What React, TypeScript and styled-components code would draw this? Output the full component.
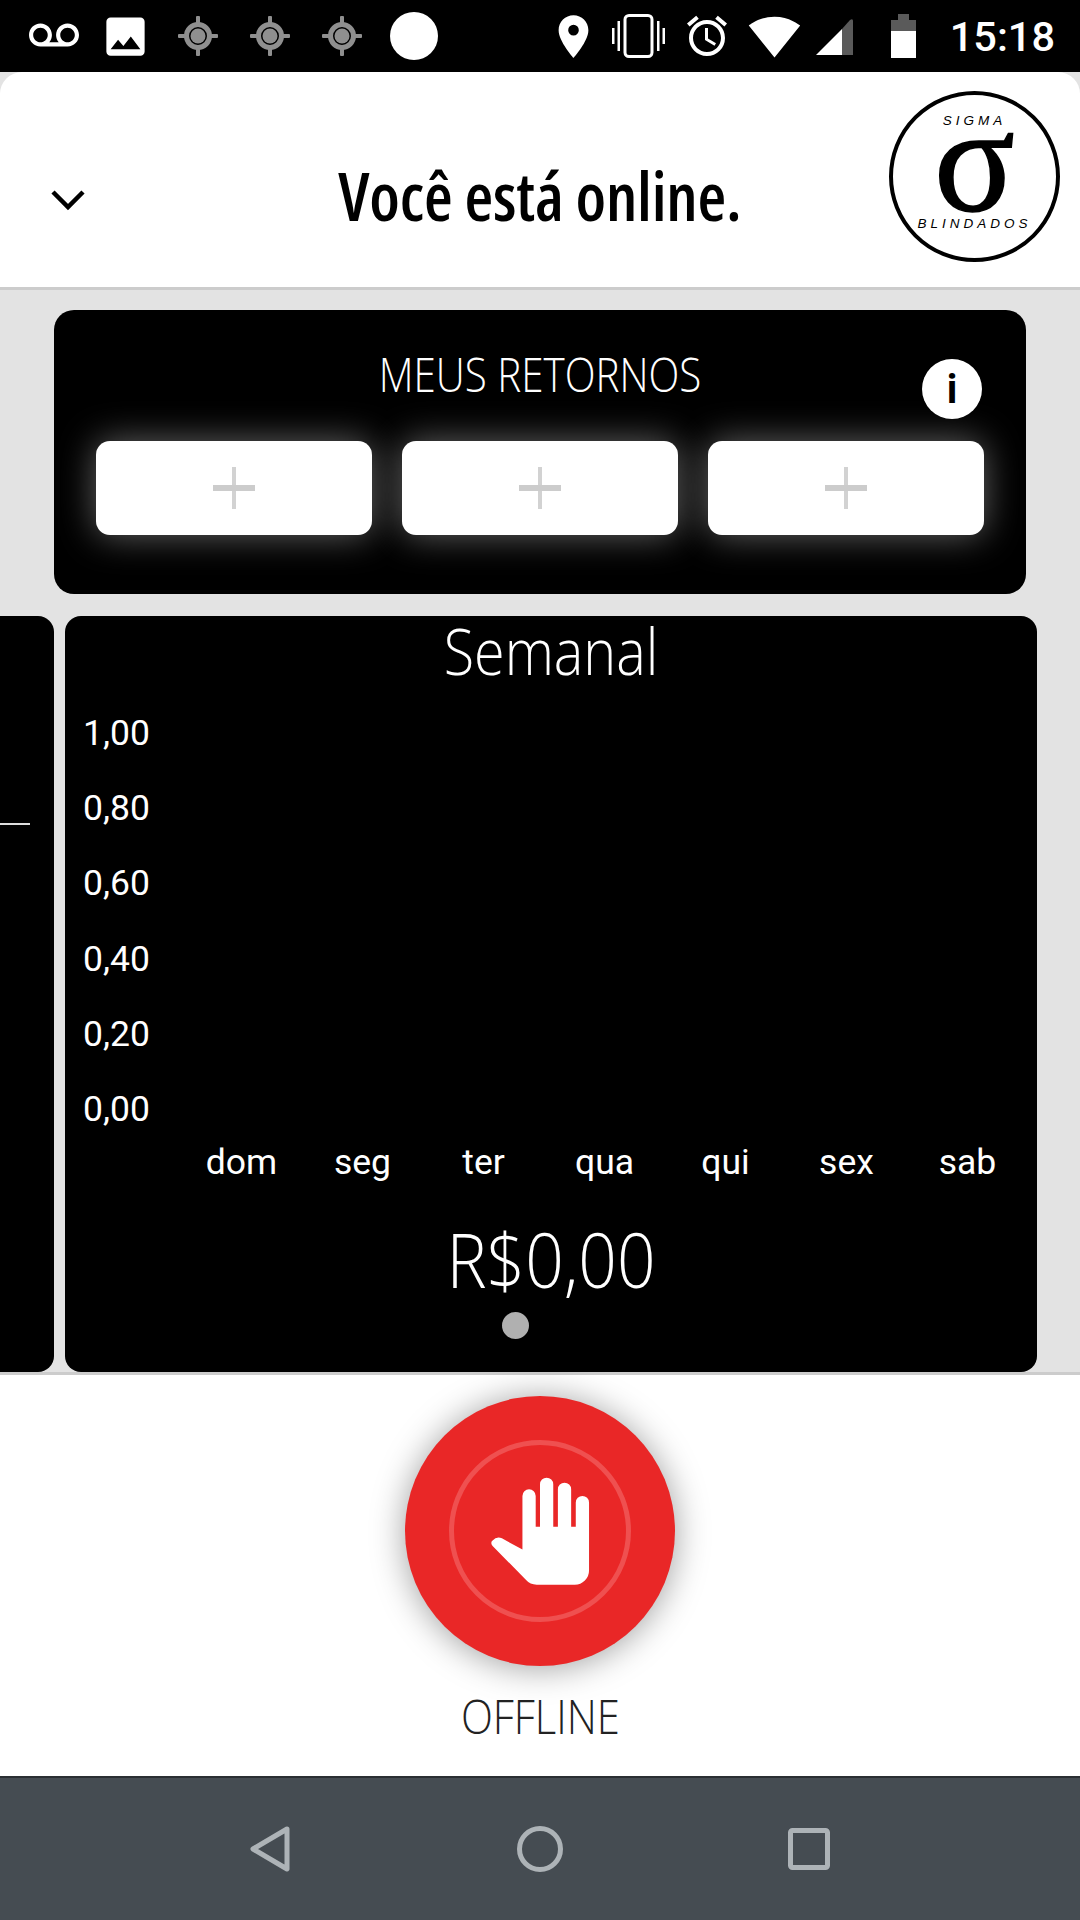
import styled, { createGlobalStyle } from 'styled-components';
import { MdVoicemail, MdPhoto, MdLocationOn, MdAccessAlarm, MdSignalWifi4Bar } from 'react-icons/md';

const GlobalStyle = createGlobalStyle`
  html, body {
    margin: 0;
    padding: 0;
    background: #e3e3e3;
  }
  #root {
    width: 1080px;
    height: 1920px;
    overflow: hidden;
  }
  * { box-sizing: border-box; }
`;

const yLabels = ['1,00', '0,80', '0,60', '0,40', '0,20', '0,00'];
const days = ['dom', 'seg', 'ter', 'qua', 'qui', 'sex', 'sab'];

function PlusIcon() {
  return (
    <svg width="42" height="42" viewBox="0 0 42 42">
      <rect x="19" y="0" width="4" height="42" fill="#d2d2d2" />
      <rect x="0" y="18" width="42" height="6" fill="#cccccc" />
    </svg>
  );
}

function HandIcon() {
  return (
    <svg width="100" height="110" viewBox="450 345 300 332">
      <path
        fill="#fff"
        d="M547 405a20 20 0 0 1 40 0V498H600V370a20 20 0 0 1 40 0V498H654V385a20 20 0 0 1 40 0V498H708V425a20 20 0 0 1 40 0V630a43 43 0 0 1-43 43H590q-20 0-32-14L457 556q-8-10 0-16q12-14 28-7L547 567Z"
      />
    </svg>
  );
}

function GpsIcon() {
  return (
    <svg width="40" height="40" viewBox="0 0 40 40">
      <g fill="#8f8f8f">
        <rect x="18" y="0" width="4" height="8" rx="1" />
        <rect x="18" y="32" width="4" height="8" rx="1" />
        <rect x="0" y="18" width="8" height="4" rx="1" />
        <rect x="32" y="18" width="8" height="4" rx="1" />
        <circle cx="20" cy="20" r="7.5" />
      </g>
      <circle cx="20" cy="20" r="11.5" fill="none" stroke="#8f8f8f" strokeWidth="5" />
    </svg>
  );
}

function VibrateIcon() {
  return (
    <svg width="53" height="44" viewBox="0 0 53 44">
      <rect x="13" y="1.5" width="27" height="41" rx="4" fill="none" stroke="#fff" strokeWidth="3" />
      <g fill="#fff">
        <rect x="0" y="14" width="2.5" height="16" />
        <rect x="5.5" y="7" width="2.5" height="30" />
        <rect x="45" y="7" width="2.5" height="30" />
        <rect x="50.5" y="14" width="2.5" height="16" />
      </g>
    </svg>
  );
}

export default function App() {
  return (
    <Screen>
      <GlobalStyle />
      <StatusBar>
        <Slot $ml={0}><MdVoicemail size={50} /></Slot>
        <Slot $ml={21}><MdPhoto size={51} /></Slot>
        <Slot $ml={27}><GpsIcon /></Slot>
        <Slot $ml={32}><GpsIcon /></Slot>
        <Slot $ml={32}><GpsIcon /></Slot>
        <WhiteDot />
        <StatusRight>
          <Slot $ml={0}><MdLocationOn size={51} /></Slot>
          <Slot $ml={13}><VibrateIcon /></Slot>
          <Slot $ml={18}><MdAccessAlarm size={48} /></Slot>
          <Slot $ml={17}><MdSignalWifi4Bar size={53} /></Slot>
          <Slot $ml={15}>
            <svg width="37" height="37" viewBox="0 0 37 37">
              <path d="M0 37 L26 11 L26 37 Z" fill="#fff" />
              <path d="M26 11 L34 2 Q37 0 37 3 L37 37 L26 37 Z" fill="#5a5a5a" />
            </svg>
          </Slot>
          <Slot $ml={38}>
            <svg width="25" height="44" viewBox="0 0 25 44">
              <path d="M7 0H18V6H25V17H0V6H7Z" fill="#5a5a5a" />
              <rect x="0" y="17" width="25" height="27" fill="#fff" />
            </svg>
          </Slot>
          <Clock>15:18</Clock>
        </StatusRight>
      </StatusBar>

      <Header>
        <Chevron viewBox="0 0 36 22">
          <path d="M3 3 L18 18 L33 3" fill="none" stroke="#000" strokeWidth="4.5" />
        </Chevron>
        <Title>Você está online.</Title>
        <Logo>
          <LogoText>SIGMA</LogoText>
          <Sigma>σ</Sigma>
          <LogoText>BLINDADOS</LogoText>
        </Logo>
      </Header>

      <Content>
        <ReturnsCard>
          <CardHeading>MEUS RETORNOS</CardHeading>
          <InfoBadge>i</InfoBadge>
          <ReturnButtons>
            <ReturnButton><PlusIcon /></ReturnButton>
            <ReturnButton><PlusIcon /></ReturnButton>
            <ReturnButton><PlusIcon /></ReturnButton>
          </ReturnButtons>
        </ReturnsCard>

        <Carousel>
          <PrevSlide>
            <ChartLine />
          </PrevSlide>
          <Slide>
            <SlideTitle>Semanal</SlideTitle>
            <YAxis>
              {yLabels.map((label) => <YLabel key={label}>{label}</YLabel>)}
            </YAxis>
            <XAxis>
              {days.map((day) => <DayLabel key={day}>{day}</DayLabel>)}
            </XAxis>
            <Total>R$0,00</Total>
            <Dots>
              <Dot $active />
              <Dot />
            </Dots>
          </Slide>
        </Carousel>
      </Content>

      <Footer>
        <StopButton>
          <StopRing>
            <HandIcon />
          </StopRing>
        </StopButton>
        <StatusLabel>OFFLINE</StatusLabel>
      </Footer>

      <NavBar>
        <svg width="42" height="48" viewBox="0 0 42 48">
          <path d="M38 4 L4 24 L38 44 Z" fill="none" stroke="#adb3b7" strokeWidth="5" strokeLinejoin="round" />
        </svg>
        <svg width="46" height="46" viewBox="0 0 46 46">
          <circle cx="23" cy="23" r="20.5" fill="none" stroke="#adb3b7" strokeWidth="5" />
        </svg>
        <svg width="42" height="42" viewBox="0 0 42 42">
          <rect x="2.5" y="2.5" width="37" height="37" rx="2" fill="none" stroke="#adb3b7" strokeWidth="5" />
        </svg>
      </NavBar>
    </Screen>
  );
}

const Screen = styled.div`
  width: 1080px;
  height: 1920px;
  display: flex;
  flex-direction: column;
  background: #e3e3e3;
  font-family: 'Open Sans', 'Liberation Sans', sans-serif;
`;

const StatusBar = styled.div`
  height: 72px;
  flex: none;
  background: #000;
  color: #fff;
  display: flex;
  align-items: center;
  padding: 0 25px 0 29px;
`;

const Slot = styled.div<{ $ml: number }>`
  display: flex;
  align-items: center;
  margin-left: ${(p) => p.$ml}px;
`;

const WhiteDot = styled.div`
  width: 48px;
  height: 48px;
  border-radius: 50%;
  background: #fff;
  margin-left: 28px;
`;

const StatusRight = styled.div`
  display: flex;
  align-items: center;
  margin-left: auto;
`;

const Clock = styled.div`
  font-family: Roboto, sans-serif;
  font-weight: 500;
  font-size: 41.5px;
  margin-left: 34px;
`;

const Header = styled.div`
  height: 218px;
  flex: none;
  background: #fff;
  border-bottom: 3px solid #ccc;
  border-radius: 22px 22px 0 0;
  display: grid;
  grid-template-columns: 1fr auto 1fr;
  align-items: center;
  padding: 0 20px;
`;

const Chevron = styled.svg`
  width: 36px;
  height: 22px;
  margin: 40px 0 0 30px;
`;

const Title = styled.h1`
  margin: 30px 0 0;
  text-align: center;
  font-size: 66px;
  font-weight: 600;
  font-stretch: 75%;
  color: #000;
  letter-spacing: -0.2px;
  white-space: nowrap;
`;

const Logo = styled.div`
  width: 171px;
  height: 171px;
  justify-self: end;
  border: 4px solid #000;
  border-radius: 50%;
  display: flex;
  flex-direction: column;
  align-items: center;
  padding-top: 19px;
  margin-top: -6px;
`;

const LogoText = styled.span`
  font-family: 'Liberation Sans', sans-serif;
  font-style: italic;
  font-size: 13.5px;
  line-height: 14px;
  letter-spacing: 4px;
  color: #000;
`;

const Sigma = styled.span`
  font-family: 'Liberation Serif', serif;
  font-size: 150px;
  font-weight: 400;
  -webkit-text-stroke: 1.5px #000;
  line-height: 64px;
  height: 64px;
  margin-bottom: 25px;
  color: #000;
`;

const Content = styled.div`
  flex: none;
  height: 1082px;
  padding-top: 20px;
  display: flex;
  flex-direction: column;
  background: #e3e3e3;
`;

const ReturnsCard = styled.section`
  position: relative;
  width: 972px;
  height: 284px;
  margin-left: 54px;
  background: #000;
  border-radius: 20px;
  padding-top: 39px;
`;

const CardHeading = styled.h2`
  margin: 0;
  text-align: center;
  color: #fff;
  font-size: 48px;
  line-height: 50px;
  font-weight: 300;
  transform: scaleX(0.84);
`;

const InfoBadge = styled.div`
  position: absolute;
  top: 49px;
  right: 44px;
  width: 60px;
  height: 60px;
  border-radius: 50%;
  background: #fff;
  color: #000;
  display: flex;
  align-items: center;
  justify-content: center;
  font-family: Roboto, sans-serif;
  font-weight: 700;
  font-size: 40px;
`;

const ReturnButtons = styled.div`
  display: grid;
  grid-template-columns: repeat(3, 276px);
  column-gap: 30px;
  padding: 0 42px;
  margin-top: 42px;
`;

const ReturnButton = styled.div`
  height: 94px;
  background: #fff;
  border-radius: 14px;
  box-shadow: 0 0 36px rgba(255, 255, 255, 0.4);
  display: flex;
  align-items: center;
  justify-content: center;
`;

const Carousel = styled.div`
  display: flex;
  gap: 11px;
  margin-top: 22px;
  margin-left: -918px;
  height: 756px;
`;

const PrevSlide = styled.div`
  width: 972px;
  flex: none;
  background: #000;
  border-radius: 16px;
  padding: 207px 24px 0 0;
`;

const ChartLine = styled.div`
  height: 2px;
  width: 30px;
  margin-left: auto;
  background: #ddd;
`;

const Slide = styled.section`
  width: 972px;
  flex: none;
  background: #000;
  border-radius: 16px;
  color: #fff;
  display: flex;
  flex-direction: column;
`;

const SlideTitle = styled.h2`
  margin: 0;
  text-align: center;
  font-size: 64px;
  line-height: 70px;
  font-weight: 300;
  transform: scaleX(0.87);
`;

const YAxis = styled.div`
  display: flex;
  flex-direction: column;
  padding: 10px 0 0 18px;
`;

const YLabel = styled.div`
  font-family: Roboto, sans-serif;
  font-size: 35.5px;
  height: 75.2px;
  line-height: 75.2px;
`;

const XAxis = styled.div`
  display: grid;
  grid-template-columns: repeat(7, 121px);
  padding-left: 116px;
  margin-top: -5px;
`;

const DayLabel = styled.div`
  font-family: Roboto, sans-serif;
  font-size: 35.5px;
  line-height: 40px;
  text-align: center;
`;

const Total = styled.div`
  text-align: center;
  font-size: 76px;
  line-height: 90px;
  font-weight: 300;
  transform: scaleX(0.89);
  margin-top: 32px;
`;

const Dots = styled.div`
  display: flex;
  justify-content: center;
  gap: 44px;
  margin-top: 8px;
`;

const Dot = styled.span<{ $active?: boolean }>`
  width: 27px;
  height: 27px;
  border-radius: 50%;
  background: ${(p) => (p.$active ? '#b0b0b0' : '#000')};
`;

const Footer = styled.div`
  flex: none;
  height: 404px;
  background: #fff;
  border-top: 3px solid #ccc;
  display: flex;
  flex-direction: column;
  align-items: center;
  padding-top: 21px;
`;

const StopButton = styled.div`
  width: 270px;
  height: 270px;
  border-radius: 50%;
  background: #e92727;
  box-shadow: 0 2px 34px rgba(0, 0, 0, 0.38);
  display: flex;
  align-items: center;
  justify-content: center;
`;

const StopRing = styled.div`
  width: 182px;
  height: 182px;
  border-radius: 50%;
  border: 5px solid #ef5050;
  display: flex;
  align-items: center;
  justify-content: center;
`;

const StatusLabel = styled.div`
  margin-top: 22px;
  font-size: 48px;
  line-height: 56px;
  font-weight: 300;
  transform: scaleX(0.87);
  color: #222;
`;

const NavBar = styled.nav`
  flex: none;
  height: 144px;
  background: #454c52;
  border-top: 2px solid #2a2f33;
  display: flex;
  align-items: center;
  justify-content: space-between;
  padding: 0 250px 0 249px;
`;
